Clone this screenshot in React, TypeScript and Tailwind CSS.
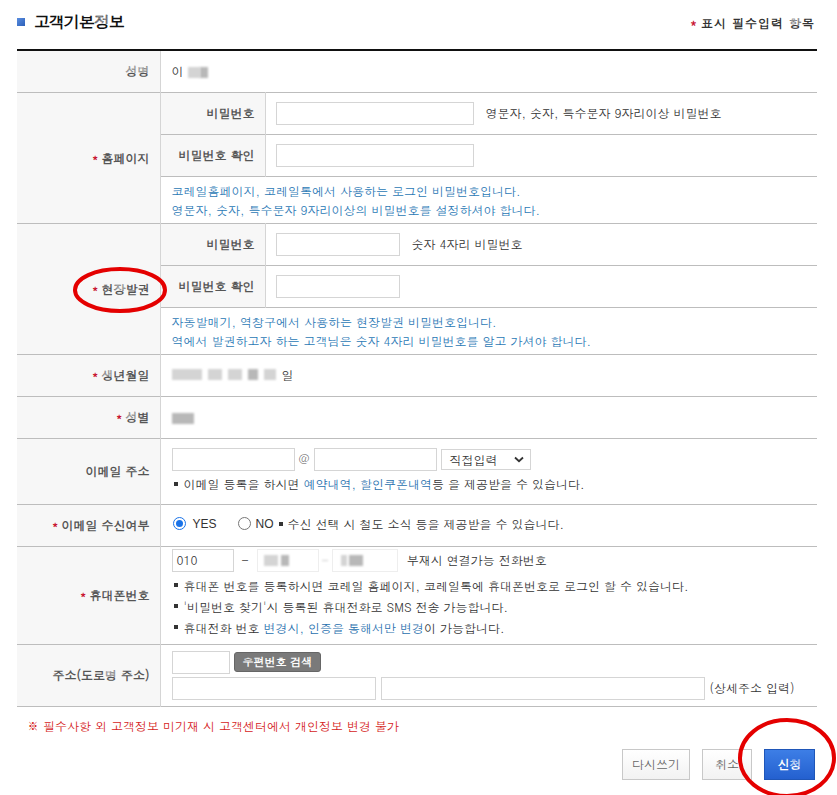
import React from 'react';

const Req = () => <span className="text-[#c8102e] mr-[3px] text-[11px] align-[1px]">*</span>;

const Blur = ({ w, dark = false }: { w: number; dark?: boolean }) => (
  <span
    className={`inline-block h-[11px] align-middle blur-[1.2px] ${dark ? 'bg-[#b8b8b8]' : 'bg-[#d4d4d4]'}`}
    style={{ width: w }}
  />
);

const Field = ({ w, children }: { w: string; children?: React.ReactNode }) => (
  <div className={`h-[23px] border border-[#d5d5d5] bg-white flex items-center px-[4px] text-[12px] text-[#333] ${w}`}>
    {children}
  </div>
);

const Label = ({ children, rows }: { children: React.ReactNode; rows?: number }) => (
  <td rowSpan={rows} className="w-[143px] bg-[#f7f7f7] border-r border-[#d5d5d5] text-right pr-[10px] font-bold text-[#555] text-[12px]">
    {children}
  </td>
);

const SubLabel = ({ children }: { children: React.ReactNode }) => (
  <td className="w-[105px] bg-[#f7f7f7] border-r border-[#d5d5d5] text-right pr-[10px] font-bold text-[#555] text-[12px]">
    {children}
  </td>
);

const Bullet = ({ children }: { children: React.ReactNode }) => (
  <div className="flex items-center text-[12px] text-[#333] leading-[21px]">
    <span className="inline-block w-[4px] h-[4px] bg-[#333] mr-[6px] ml-[2px]" />
    <span>{children}</span>
  </div>
);

export default function App() {
  return (
    <div className="relative w-[837px] h-[795px] bg-white font-['Dotum','Noto_Sans_CJK_KR',sans-serif] overflow-hidden">
      <div className="pl-[17px] pr-[20px]">
        {/* Header */}
        <div className="flex items-end justify-between h-[34px] pb-[2px]">
          <div className="flex items-center">
            <span className="w-[8px] h-[8px] bg-gradient-to-br from-[#5a8ee0] to-[#2c5fb8] mr-[9px]" />
            <h1 className="text-[16px] font-bold text-[#111] tracking-[-1px] leading-[20px]">고객기본정보</h1>
          </div>
          <div className="text-[12px] font-bold text-[#333] tracking-[1px] pr-[2px]">
            <span className="text-[#c8102e] mr-[3px]">*</span>표시 필수입력 항목
          </div>
        </div>
        <div className="h-[15px]" />
        <div className="h-[2px] bg-[#111]" />

        <table className="w-[800px] border-collapse table-fixed">
          <colgroup>
            <col className="w-[143px]" />
            <col className="w-[105px]" />
            <col />
          </colgroup>
          <tbody>
            <tr className="h-[41px] border-b border-[#bdbdbd]">
              <Label>성명</Label>
              <td colSpan={2} className="pl-[11px] text-[12px] text-[#333]">
                이 <Blur w={12} /><Blur w={8} dark />
              </td>
            </tr>

            <tr className="h-[42px] border-b border-[#bdbdbd]">
              <Label rows={3}><Req />홈페이지</Label>
              <SubLabel>비밀번호</SubLabel>
              <td className="pl-[10px]">
                <div className="flex items-center">
                  <Field w="w-[198px]" />
                  <span className="ml-[12px] text-[12px] text-[#333]">영문자, 숫자, 특수문자 9자리이상 비밀번호</span>
                </div>
              </td>
            </tr>
            <tr className="h-[42px] border-b border-[#bdbdbd]">
              <SubLabel>비밀번호 확인</SubLabel>
              <td className="pl-[10px]">
                <Field w="w-[198px]" />
              </td>
            </tr>
            <tr className="h-[47px] border-b border-[#bdbdbd]">
              <td colSpan={2} className="pl-[11px] text-[12px] text-[#2a78b5] leading-[19px]">
                <div>코레일홈페이지, 코레일톡에서 사용하는 로그인 비밀번호입니다.</div>
                <div>영문자, 숫자, 특수문자 9자리이상의 비밀번호를 설정하셔야 합니다.</div>
              </td>
            </tr>

            <tr className="h-[42px] border-b border-[#bdbdbd]">
              <Label rows={3}><Req />현장발권</Label>
              <SubLabel>비밀번호</SubLabel>
              <td className="pl-[10px]">
                <div className="flex items-center">
                  <Field w="w-[124px]" />
                  <span className="ml-[12px] text-[12px] text-[#333]">숫자 4자리 비밀번호</span>
                </div>
              </td>
            </tr>
            <tr className="h-[42px] border-b border-[#bdbdbd]">
              <SubLabel>비밀번호 확인</SubLabel>
              <td className="pl-[10px]">
                <Field w="w-[124px]" />
              </td>
            </tr>
            <tr className="h-[47px] border-b border-[#bdbdbd]">
              <td colSpan={2} className="pl-[11px] text-[12px] text-[#2a78b5] leading-[19px]">
                <div>자동발매기, 역창구에서 사용하는 현장발권 비밀번호입니다.</div>
                <div>역에서 발권하고자 하는 고객님은 숫자 4자리 비밀번호를 알고 가셔야 합니다.</div>
              </td>
            </tr>

            <tr className="h-[42px] border-b border-[#bdbdbd]">
              <Label><Req />생년월일</Label>
              <td colSpan={2} className="pl-[11px] text-[12px] text-[#333]">
                <span className="inline-flex items-center gap-[6px]">
                  <Blur w={30} />
                  <Blur w={14} />
                  <Blur w={14} />
                  <Blur w={10} dark />
                  <Blur w={12} />
                  <span>일</span>
                </span>
              </td>
            </tr>

            <tr className="h-[42px] border-b border-[#bdbdbd]">
              <Label><Req />성별</Label>
              <td colSpan={2} className="pl-[11px]">
                <Blur w={22} dark />
              </td>
            </tr>

            <tr className="h-[66px] border-b border-[#bdbdbd]">
              <Label>이메일 주소</Label>
              <td colSpan={2} className="pl-[11px]">
                <div className="flex items-center">
                  <Field w="w-[123px]" />
                  <span className="mx-[4px] text-[11px] text-[#555]">@</span>
                  <Field w="w-[123px]" />
                  <div className="ml-[4px] w-[90px] h-[21px] border border-[#d5d5d5] flex items-center justify-between pl-[8px] pr-[6px] text-[12px] text-[#333]">
                    <span>직접입력</span>
                    <svg width="10" height="7" viewBox="0 0 10 7">
                      <path d="M1 1.5 L5 5.2 L9 1.5" fill="none" stroke="#333" strokeWidth="1.8" />
                    </svg>
                  </div>
                </div>
                <div className="mt-[2px]">
                  <Bullet>
                    이메일 등록을 하시면 <span className="text-[#1f6fae]">예약내역, 할인쿠폰내역</span>등 을 제공받을 수 있습니다.
                  </Bullet>
                </div>
              </td>
            </tr>

            <tr className="h-[42px] border-b border-[#bdbdbd]">
              <Label><Req />이메일 수신여부</Label>
              <td colSpan={2} className="pl-[12px]">
                <div className="flex items-center text-[12px] text-[#333] -mt-[3px]">
                  <span className="w-[13px] h-[13px] rounded-full border border-[#1a73e8] flex items-center justify-center">
                    <span className="w-[7px] h-[7px] rounded-full bg-[#1a73e8]" />
                  </span>
                  <span className="ml-[7px] font-['Liberation_Sans',sans-serif]">YES</span>
                  <span className="ml-[21px] w-[13px] h-[13px] rounded-full border border-[#777]" />
                  <span className="ml-[5px] font-['Liberation_Sans',sans-serif]">NO</span>
                  <span className="inline-block w-[4px] h-[4px] bg-[#333] mx-[5px]" />
                  <span>수신 선택 시 철도 소식 등을 제공받을 수 있습니다.</span>
                </div>
              </td>
            </tr>

            <tr className="h-[98px] border-b border-[#bdbdbd]">
              <Label><Req />휴대폰번호</Label>
              <td colSpan={2} className="pl-[11px]">
                <div className="flex items-center text-[12px] text-[#333] -mt-[4px]">
                  <Field w="w-[62px]">010</Field>
                  <span className="mx-[8px]">-</span>
                  <div className="w-[62px] h-[23px] border border-[#eee] flex items-center pl-[6px] gap-[3px]">
                    <Blur w={14} /><Blur w={8} dark />
                  </div>
                  <span className="mx-[3px] blur-[1px] text-[#bbb]">-</span>
                  <div className="w-[66px] h-[23px] border border-[#eee] flex items-center pl-[8px] gap-[2px]">
                    <Blur w={6} /><Blur w={14} dark />
                  </div>
                  <span className="ml-[9px]">부재시 연결가능 전화번호</span>
                </div>
                <div className="mt-[3px]">
                  <Bullet>휴대폰 번호를 등록하시면 코레일 홈페이지, 코레일톡에 휴대폰번호로 로그인 할 수 있습니다.</Bullet>
                  <Bullet>'비밀번호 찾기'시 등록된 휴대전화로 SMS 전송 가능합니다.</Bullet>
                  <Bullet>
                    휴대전화 번호 <span className="text-[#1f6fae]">변경시, 인증을 통해서만 변경</span>이 가능합니다.
                  </Bullet>
                </div>
              </td>
            </tr>

            <tr className="h-[62px] border-b border-[#bdbdbd]">
              <Label>주소(도로명 주소)</Label>
              <td colSpan={2} className="pl-[11px]">
                <div className="flex items-center">
                  <Field w="w-[58px]" />
                  <button className="ml-[4px] h-[20px] px-[8px] rounded-[3px] bg-[#7a7a7a] border border-[#666] text-white text-[11px] font-bold">
                    우편번호 검색
                  </button>
                </div>
                <div className="flex items-center mt-[3px]">
                  <Field w="w-[204px]" />
                  <span className="w-[5px]" />
                  <Field w="w-[324px]" />
                  <span className="ml-[5px] text-[12px] text-[#333]">(상세주소 입력)</span>
                </div>
              </td>
            </tr>
          </tbody>
        </table>

        <p className="mt-[10px] pl-[10px] text-[12px] text-[#d51a1a]">
          ※ 필수사항 외 고객정보 미기재 시 고객센터에서 개인정보 변경 불가
        </p>

        <div className="flex justify-end gap-[12px] mt-[14px] pr-[2px]">
          <button className="w-[68px] h-[31px] border border-[#c8c8c8] bg-gradient-to-b from-white to-[#f2f2f2] text-[12px] text-[#666]">
            다시쓰기
          </button>
          <button className="w-[50px] h-[31px] border border-[#c8c8c8] bg-gradient-to-b from-white to-[#f2f2f2] text-[12px] text-[#666]">
            취소
          </button>
          <button className="w-[51px] h-[31px] border border-[#1f56b8] bg-gradient-to-b from-[#3d7ee6] to-[#2460cf] text-[12px] font-bold text-white">
            신청
          </button>
        </div>
      </div>

      {/* Red annotation circles */}
      <svg className="absolute inset-0 pointer-events-none" width="837" height="795">
        <ellipse cx="120" cy="290" rx="45" ry="21" fill="none" stroke="#e40000" strokeWidth="4" />
        <ellipse cx="787" cy="758" rx="47" ry="38" fill="none" stroke="#e40000" strokeWidth="4" />
      </svg>
    </div>
  );
}
